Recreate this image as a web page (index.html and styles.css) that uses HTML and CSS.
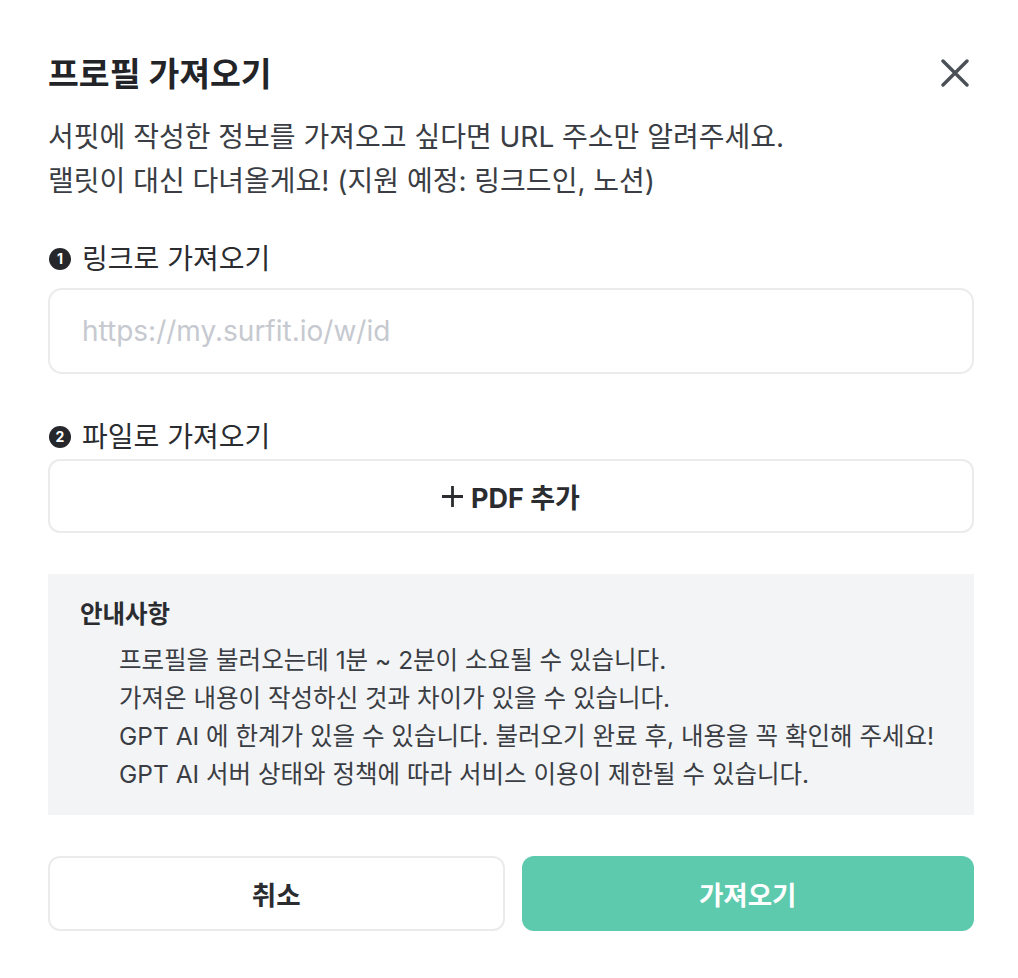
FILE: index.html
```html
<!DOCTYPE html>
<html lang="ko">
<head>
<meta charset="utf-8">
<title>프로필 가져오기</title>
<link rel="stylesheet" href="styles.css">
</head>
<body>
<div class="modal">
  <header class="head">
    <h1 class="title">프로필 가져오기</h1>
    <button class="close" type="button" aria-label="닫기">
      <svg width="28" height="28" viewBox="0 0 28 28" fill="none" stroke="#4b4f56" stroke-width="3.4" stroke-linecap="round"><path d="M2 2L26 26M26 2L2 26"/></svg>
    </button>
  </header>
  <p class="desc">서핏에 작성한 정보를 가져오고 싶다면 URL 주소만 알려주세요.<br>랠릿이 대신 다녀올게요! (지원 예정: 링크드인, 노션)</p>

  <div class="label first"><span class="num">1</span>링크로 가져오기</div>
  <input class="input" type="text" placeholder="https://my.surfit.io/w/id">

  <div class="label second"><span class="num">2</span>파일로 가져오기</div>
  <button class="pdf" type="button">
    <svg width="21" height="21" viewBox="0 0 21 21" fill="none" stroke="#2a2c30" stroke-width="2.8"><path d="M10.5 0V21M0 10.5H21"/></svg>
    <span>PDF 추가</span>
  </button>

  <section class="notice">
    <h2 class="notice-title">안내사항</h2>
    <ul class="notice-list">
      <li>프로필을 불러오는데 1분 ~ 2분이 소요될 수 있습니다.</li>
      <li>가져온 내용이 작성하신 것과 차이가 있을 수 있습니다.</li>
      <li>GPT AI 에 한계가 있을 수 있습니다. 불러오기 완료 후, 내용을 꼭 확인해 주세요!</li>
      <li>GPT AI 서버 상태와 정책에 따라 서비스 이용이 제한될 수 있습니다.</li>
    </ul>
  </section>

  <div class="actions">
    <button class="btn cancel" type="button">취소</button>
    <button class="btn confirm" type="button">가져오기</button>
  </div>
</div>
</body>
</html>
```

FILE: styles.css
```css
* { box-sizing: border-box; }
html, body { margin: 0; padding: 0; background: #ffffff; }
body {
  font-family: "Inter", "Noto Sans CJK KR", sans-serif;
  color: #2a2c30;
}
.modal {
  width: 1018px;
  padding: 54px 44px 0 48px;
}
.head {
  display: flex;
  align-items: center;
  justify-content: space-between;
  height: 40px;
}
.title {
  margin: 0;
  font-size: 33.5px;
  line-height: 40px;
  font-weight: 700;
  color: #222428;
}
.close {
  width: 38px;
  height: 38px;
  padding: 0;
  border: 0;
  background: none;
  display: flex;
  align-items: center;
  justify-content: center;
  margin-top: -2px;
}
.desc {
  margin: 21px 0 0;
  font-size: 28px;
  line-height: 44px;
  color: #3a3d43;
}
.label {
  display: flex;
  align-items: center;
  gap: 11px;
  font-size: 28px;
  line-height: 36px;
  color: #2a2c30;
}
.label.first { margin-top: 38px; }
.label.second { margin-top: 45px; }
.num {
  width: 22px;
  height: 22px;
  margin-left: 1px;
  border-radius: 50%;
  background: #25272b;
  color: #ffffff;
  font-size: 14px;
  font-weight: 700;
  line-height: 22px;
  text-align: center;
  flex: none;
}
.input {
  display: block;
  width: 100%;
  height: 86px;
  margin-top: 11px;
  padding: 0 0 0 32px;
  border: 2px solid #ebebeb;
  border-radius: 14px;
  font-family: inherit;
  font-size: 28px;
  color: #2a2c30;
  outline: none;
}
.input::placeholder { color: #c6c9cf; }
.pdf {
  display: flex;
  align-items: center;
  justify-content: center;
  gap: 8px;
  width: 100%;
  height: 74px;
  margin-top: 4px;
  border: 2px solid #ebebeb;
  border-radius: 12px;
  background: #ffffff;
  font-family: inherit;
  font-size: 27px;
  font-weight: 700;
  color: #2a2c30;
  padding: 0;
}
.notice {
  margin-top: 41px;
  height: 241px;
  background: #f3f4f6;
  padding: 24px 32px 0;
}
.notice-title {
  margin: 0;
  font-size: 24.5px;
  line-height: 32px;
  font-weight: 700;
  color: #2a2c30;
}
.notice-list {
  list-style: none;
  margin: 11px 0 0;
  padding: 0 0 0 39px;
  font-size: 24.5px;
  line-height: 38px;
  color: #3a3d43;
}
.actions {
  display: flex;
  gap: 17px;
  margin-top: 41px;
}
.btn {
  flex: 1;
  height: 75px;
  border-radius: 12px;
  font-family: inherit;
  font-size: 26.5px;
  font-weight: 700;
  padding: 0;
}
.cancel {
  background: #ffffff;
  border: 2px solid #ebebeb;
  color: #2a2c30;
}
.confirm {
  background: #5dcaae;
  border: 0;
  color: #ffffff;
}
```
